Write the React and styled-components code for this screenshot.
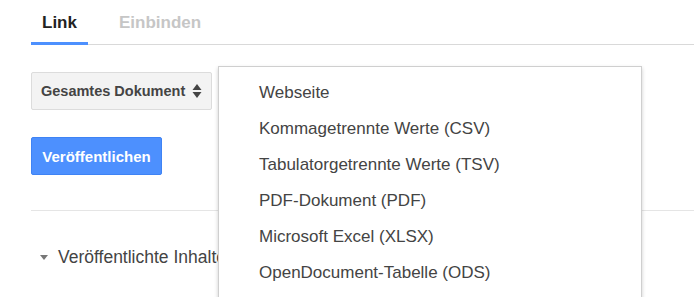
import React from "react";
import styled, { createGlobalStyle } from "styled-components";

const GlobalStyle = createGlobalStyle`
  body {
    margin: 0;
    background: #fff;
    font-family: Arial, "Liberation Sans", sans-serif;
  }
`;

const formats = [
  "Webseite",
  "Kommagetrennte Werte (CSV)",
  "Tabulatorgetrennte Werte (TSV)",
  "PDF-Dokument (PDF)",
  "Microsoft Excel (XLSX)",
  "OpenDocument-Tabelle (ODS)",
];

const App = () => {
  return (
    <Page>
      <GlobalStyle />
      <Tabs>
        <Tab active>Link</Tab>
        <Tab>Einbinden</Tab>
      </Tabs>
      <Body>
        <SelectButton>
          Gesamtes Dokument
          <svg width="10" height="16" viewBox="0 0 10 16">
            <path d="M5 1 L9.5 7 H0.5 Z" fill="#444" />
            <path d="M5 15 L9.5 9 H0.5 Z" fill="#444" />
          </svg>
        </SelectButton>
        <PublishButton>Veröffentlichen</PublishButton>
        <Divider />
        <Expander>
          <svg width="8" height="5" viewBox="0 0 8 5">
            <path d="M0 0 H8 L4 5 Z" fill="#777" />
          </svg>
          Veröffentlichte Inhalte und Einstellungen
        </Expander>
        <Menu>
          {formats.map((f) => (
            <MenuItem key={f}>{f}</MenuItem>
          ))}
        </Menu>
      </Body>
    </Page>
  );
};

export default App;

const Page = styled.div`
  width: 699px;
  height: 297px;
  overflow: hidden;
  padding: 0 5px 0 31px;
  box-sizing: border-box;
`;

const Tabs = styled.div`
  display: flex;
  gap: 20px;
  height: 45px;
  border-bottom: 1px solid #d9d9d9;
  box-sizing: border-box;
`;

const Tab = styled.div`
  display: flex;
  align-items: center;
  padding: 4px 11px 0;
  font-size: 17px;
  font-weight: bold;
  color: ${(p) => (p.active ? "#222" : "#c6c6c6")};
  border-bottom: 3px solid ${(p) => (p.active ? "#4d90fe" : "transparent")};
  margin-bottom: -1px;
`;

const Body = styled.div`
  position: relative;
  display: flex;
  flex-direction: column;
  align-items: flex-start;
  padding-top: 27px;
`;

const SelectButton = styled.div`
  display: flex;
  align-items: center;
  gap: 7px;
  height: 38px;
  width: 181px;
  box-sizing: border-box;
  padding: 0 7px 0 9px;
  background: #f3f3f3;
  border: 1px solid #dcdcdc;
  border-radius: 2px;
  font-size: 14.5px;
  font-weight: bold;
  color: #444;
  white-space: nowrap;

  svg {
    flex-shrink: 0;
  }
`;

const PublishButton = styled.div`
  display: flex;
  align-items: center;
  justify-content: center;
  margin-top: 27px;
  height: 38px;
  width: 131px;
  box-sizing: border-box;
  background: #4d90fe;
  border: 1px solid #3f83f4;
  border-radius: 2px;
  font-size: 15px;
  font-weight: bold;
  color: #fff;
`;

const Divider = styled.div`
  align-self: stretch;
  margin-top: 35px;
  height: 1px;
  background: #e5e5e5;
`;

const Expander = styled.div`
  display: flex;
  align-items: center;
  gap: 10px;
  width: 187px;
  overflow: hidden;
  margin-top: 36px;
  padding-left: 9px;
  box-sizing: border-box;
  font-size: 17.5px;
  color: #444;
  white-space: nowrap;

  svg {
    flex-shrink: 0;
  }
`;

const Menu = styled.div`
  position: absolute;
  left: 187px;
  top: 21px;
  width: 424px;
  height: 260px;
  box-sizing: border-box;
  padding-top: 8px;
  background: #fff;
  border: 1px solid #cfcfcf;
  box-shadow: 0 2px 4px rgba(0, 0, 0, 0.2);
`;

const MenuItem = styled.div`
  height: 36px;
  display: flex;
  align-items: center;
  padding-left: 40px;
  font-size: 17px;
  color: #444;
  white-space: nowrap;
`;
